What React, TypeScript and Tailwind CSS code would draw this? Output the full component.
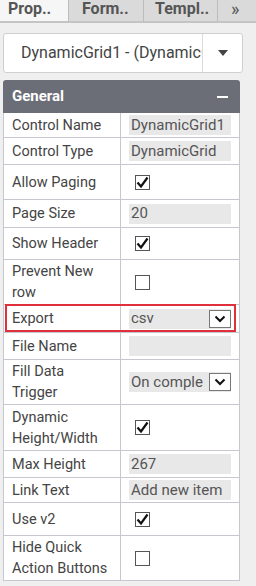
import React from "react";

type Row = {
  label: string;
  h: number;
  kind: "text" | "check" | "select" | "empty";
  value?: string;
  checked?: boolean;
  highlight?: boolean;
};

const rows: Row[] = [
  { label: "Control Name", h: 25, kind: "text", value: "DynamicGrid1" },
  { label: "Control Type", h: 27, kind: "text", value: "DynamicGrid" },
  { label: "Allow Paging", h: 35, kind: "check", checked: true },
  { label: "Page Size", h: 28, kind: "text", value: "20" },
  { label: "Show Header", h: 32, kind: "check", checked: true },
  { label: "Prevent New row", h: 45, kind: "check", checked: false },
  { label: "Export", h: 28, kind: "select", value: "csv", highlight: true },
  { label: "File Name", h: 27, kind: "empty" },
  { label: "Fill Data Trigger", h: 45, kind: "select", value: "On comple" },
  { label: "Dynamic Height/Width", h: 46, kind: "check", checked: true },
  { label: "Max Height", h: 27, kind: "text", value: "267" },
  { label: "Link Text", h: 25, kind: "text", value: "Add new item" },
  { label: "Use v2", h: 33, kind: "check", checked: true },
  { label: "Hide Quick Action Buttons", h: 44, kind: "check", checked: false },
];

function Checkbox({ checked }: { checked?: boolean }) {
  return (
    <span className="ml-[14px] flex h-[15px] w-[15px] items-center justify-center border border-[#555] bg-white">
      {checked && (
        <svg width="13" height="13" viewBox="0 0 13 13">
          <path d="M1.5 6.5 L5 10.5 L11.5 1.5" fill="none" stroke="#111" strokeWidth="2.2" />
        </svg>
      )}
    </span>
  );
}

function ArrowButton() {
  return (
    <span className="flex h-[18px] w-[22px] shrink-0 items-center justify-center border border-[#777] bg-white">
      <svg width="12" height="8" viewBox="0 0 12 8">
        <path d="M1.5 1.5 L6 6 L10.5 1.5" fill="none" stroke="#111" strokeWidth="2" />
      </svg>
    </span>
  );
}

function Value({ row }: { row: Row }) {
  if (row.kind === "check") return <Checkbox checked={row.checked} />;
  if (row.kind === "select")
    return (
      <span className="ml-[8px] flex h-[20px] w-[102px] items-center bg-[#e8e8e8]">
        <span className="flex-1 overflow-hidden whitespace-nowrap pl-[2px] text-[15px] text-[#555]">{row.value}</span>
        <ArrowButton />
      </span>
    );
  return (
    <span className="ml-[8px] flex h-[20px] w-[102px] items-center overflow-hidden whitespace-nowrap bg-[#e8e8e8] pl-[2px] text-[15px] text-[#555]">
      {row.value}
    </span>
  );
}

export default function App() {
  return (
    <div className="h-[586px] w-[256px] overflow-hidden bg-[#efefef] font-['Roboto',sans-serif]">
      {/* tabs */}
      <div className="flex h-[23px] border-b-2 border-[#c4c4c4] text-[16px] font-bold leading-[18px] text-[#555]">
        <div className="w-[68px] bg-[#f6f6f6] pl-[8px]">Prop..</div>
        <div className="w-[75px] border-l border-[#bcbcbc] bg-[#dadada] pl-[13px]">Form..</div>
        <div className="w-[74px] border-l border-[#bcbcbc] bg-[#dadada] pl-[11px]">Templ..</div>
        <div className="flex-1 border-l border-[#bcbcbc] bg-[#dadada] pl-[13px] text-[18px] font-normal">»</div>
      </div>

      {/* control dropdown */}
      <div className="ml-[3px] mt-[10px] flex h-[40px] w-[240px] items-center rounded-[3px] border border-[#cfcfcf] bg-white">
        <span className="flex-1 overflow-hidden whitespace-nowrap pl-[17px] text-[16px] text-[#444]">
          DynamicGrid1 - (DynamicGrid)
        </span>
        <span className="flex h-full w-[40px] items-center justify-center border-l border-[#dcdcdc]">
          <svg width="10" height="6" viewBox="0 0 10 6">
            <path d="M0 0 H10 L5 6 Z" fill="#444" />
          </svg>
        </span>
      </div>

      {/* general section */}
      <div className="ml-[3px] mt-[7px] w-[237px]">
        <div className="flex h-[33px] items-center justify-between rounded-t-[3px] bg-[#6c6e77] pl-[9px] pr-[12px] text-[15px] font-bold text-white">
          <span>General</span>
          <span className="block h-[2px] w-[11px] bg-white" />
        </div>
        <div className="border-x border-b border-[#c6c8d0] bg-white">
          {rows.map((row) => (
            <div
              key={row.label}
              className="relative flex border-b border-[#c6c8d0] last:border-b-0"
              style={{ height: row.h }}
            >
              <div className="flex w-[117px] items-center border-r border-[#c6c8d0] pl-[8px] pr-[12px] text-[14.5px] leading-[21px] text-[#444]">
                {row.label}
              </div>
              <div className="flex flex-1 items-center">
                {row.kind === "empty" ? (
                  <span className="ml-[8px] h-[20px] w-[102px] bg-[#e8e8e8]" />
                ) : (
                  <Value row={row} />
                )}
              </div>
              {row.highlight && (
                <span className="pointer-events-none absolute -top-px bottom-0 left-[1px] right-[3px] border-2 border-solid border-[color:#e0303c]" />
              )}
            </div>
          ))}
        </div>
      </div>
    </div>
  );
}
